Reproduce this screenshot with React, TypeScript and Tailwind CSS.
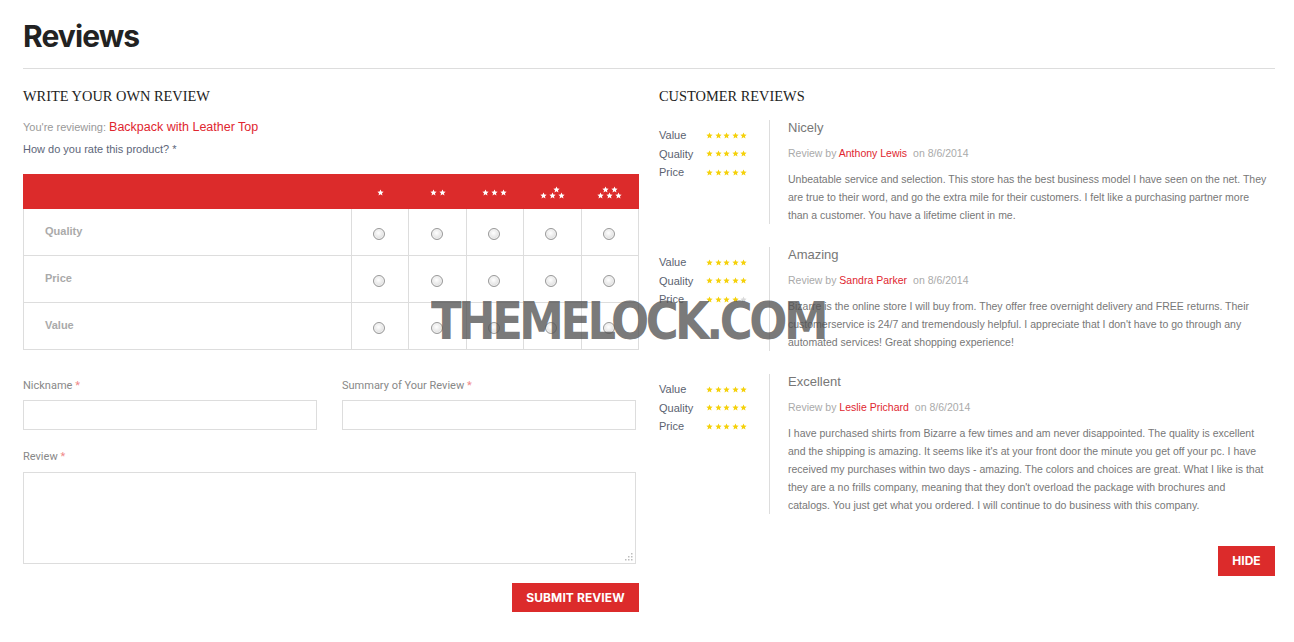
import React from "react";

const RED = "bg-[#dc2b2b]";

function Star({ className, size = 7 }: { className: string; size?: number }) {
  return (
    <svg width={size} height={size} viewBox="0 0 24 24" className={className}>
      <path d="M12 1.5l3.1 7.1 7.7.7-5.8 5.1 1.7 7.6L12 18l-6.7 4 1.7-7.6L1.2 9.3l7.7-.7z" fill="currentColor" />
    </svg>
  );
}

function Stars({ n }: { n: number }) {
  return (
    <div className="flex gap-[1.6px]">
      {[0, 1, 2, 3, 4].map((i) => (
        <Star key={i} size={7} className={i < n ? "text-[#f5d10a]" : "text-[#d9d9d9]"} />
      ))}
    </div>
  );
}

function HeadStars({ top, bottom, shift = 0 }: { top: number; bottom: number; shift?: number }) {
  return (
    <div className="flex flex-col items-center">
      {top > 0 && (
        <div className="flex gap-[2px] -mb-[1px]" style={{ transform: `translateX(${shift}px)` }}>
          {Array.from({ length: top }).map((_, i) => (
            <Star key={i} size={7} className="text-white" />
          ))}
        </div>
      )}
      <div className="flex gap-[2px]">
        {Array.from({ length: bottom }).map((_, i) => (
          <Star key={i} size={7} className="text-white" />
        ))}
      </div>
    </div>
  );
}

function Radio() {
  return (
    <span className="block w-[12px] h-[12px] rounded-full border border-[#9a9a9a] bg-[radial-gradient(circle_at_45%_40%,#ffffff_0%,#e6e6e6_55%,#c4c4c4_100%)] shadow-[inset_0_0_0_1px_#f2f2f2]" />
  );
}

const heads = [
  { top: 0, bottom: 1, shift: 0 },
  { top: 0, bottom: 2, shift: 0 },
  { top: 0, bottom: 3, shift: 0 },
  { top: 1, bottom: 3, shift: 4 },
  { top: 2, bottom: 3, shift: 0 },
];

const reviews = [
  {
    title: "Nicely",
    by: "Anthony Lewis",
    ratings: [5, 5, 5],
    body: "Unbeatable service and selection. This store has the best business model I have seen on the net. They are true to their word, and go the extra mile for their customers. I felt like a purchasing partner more than a customer. You have a lifetime client in me.",
  },
  {
    title: "Amazing",
    by: "Sandra Parker",
    ratings: [5, 5, 4],
    body: "Bizarre is the online store I will buy from. They offer free overnight delivery and FREE returns. Their customerservice is 24/7 and tremendously helpful. I appreciate that I don't have to go through any automated services! Great shopping experience!",
  },
  {
    title: "Excellent",
    by: "Leslie Prichard",
    ratings: [5, 5, 5],
    body: "I have purchased shirts from Bizarre a few times and am never disappointed. The quality is excellent and the shipping is amazing. It seems like it's at your front door the minute you get off your pc. I have received my purchases within two days - amazing. The colors and choices are great. What I like is that they are a no frills company, meaning that they don't overload the package with brochures and catalogs. You just get what you ordered. I will continue to do business with this company.",
  },
];

export default function App() {
  return (
    <div className="relative w-[1294px] h-[642px] bg-white overflow-hidden font-['Liberation_Sans',Arial,sans-serif]">
      <div className="ml-[23px] w-[1252px]">
        <div className="pt-[18px] pb-[14px] border-b border-[#dddddd]">
          <h1 className="font-['Inter',sans-serif] font-bold text-[30px] leading-[36px] text-[#222] tracking-[-0.9px]">
            Reviews
          </h1>
        </div>

        <div className="flex gap-[20px]">
          {/* Left column */}
          <div className="w-[616px]">
            <h3 className="mt-[17px] font-['Liberation_Serif',serif] text-[14.4px] leading-[20px] text-[#222] uppercase">
              Write your own review
            </h3>
            <p className="mt-[13px] text-[11px] leading-[16px] text-[#999]">
              You're reviewing: <span className="text-[12.5px] text-[#e0262f]">Backpack with Leather Top</span>
            </p>
            <p className="mt-[6px] text-[11px] leading-[16px] text-[#5d6679]">How do you rate this product? *</p>

            <table className="mt-[17px] w-[616px] border-collapse table-fixed">
              <colgroup>
                <col className="w-[328px]" />
                <col />
                <col />
                <col />
                <col />
                <col />
              </colgroup>
              <thead>
                <tr className={`${RED} h-[34px]`}>
                  <th className="border border-[#dc2b2b]" />
                  {heads.map((h, i) => (
                    <th key={i} className="border border-[#dc2b2b] align-middle">
                      <div className="flex justify-center pt-[1px]">
                        <HeadStars top={h.top} bottom={h.bottom} shift={h.shift} />
                      </div>
                    </th>
                  ))}
                </tr>
              </thead>
              <tbody>
                {["Quality", "Price", "Value"].map((label) => (
                  <tr key={label} className="h-[47px]">
                    <td className="border border-[#dddddd] pl-[21px] text-[11px] font-bold text-[#aaaaaa] align-middle">
                      <span className="relative -top-[1px]">{label}</span>
                    </td>
                    {[0, 1, 2, 3, 4].map((i) => (
                      <td key={i} className="border border-[#dddddd] align-middle">
                        <div className="flex justify-center pt-[4px] -ml-[2px]">
                          <Radio />
                        </div>
                      </td>
                    ))}
                  </tr>
                ))}
              </tbody>
            </table>

            <div className="mt-[27px] flex gap-[25px] w-[613px]">
              <div className="flex-1">
                <label className="block font-['Roboto',sans-serif] text-[11px] leading-[17px] text-[#888]">
                  Nickname <span className="text-[#f08a8a]">*</span>
                </label>
                <div className="mt-[6px] h-[30px] border border-[#dddddd]" />
              </div>
              <div className="flex-1">
                <label className="block font-['Roboto',sans-serif] text-[11px] leading-[17px] text-[#888]">
                  Summary of Your Review <span className="text-[#f08a8a]">*</span>
                </label>
                <div className="mt-[6px] h-[30px] border border-[#dddddd]" />
              </div>
            </div>

            <label className="mt-[18px] block font-['Roboto',sans-serif] text-[11px] leading-[17px] text-[#888]">
              Review <span className="text-[#f08a8a]">*</span>
            </label>
            <div className="relative mt-[7px] w-[613px] h-[92px] border border-[#dddddd]">
              <svg width="9" height="9" viewBox="0 0 9 9" className="absolute right-[2px] bottom-[2px]">
                <g fill="#bdbdbd">
                  <rect x="7" y="1" width="1.5" height="1.5" />
                  <rect x="4" y="4" width="1.5" height="1.5" />
                  <rect x="7" y="4" width="1.5" height="1.5" />
                  <rect x="1" y="7" width="1.5" height="1.5" />
                  <rect x="4" y="7" width="1.5" height="1.5" />
                  <rect x="7" y="7" width="1.5" height="1.5" />
                </g>
              </svg>
            </div>

            <div className="mt-[19px] flex justify-end">
              <button className={`${RED} h-[29px] w-[127px] text-white font-['Inter',sans-serif] font-bold text-[12px] tracking-[0.1px] uppercase`}>
                Submit Review
              </button>
            </div>
          </div>

          {/* Right column */}
          <div className="w-[616px]">
            <h3 className="mt-[17px] font-['Liberation_Serif',serif] text-[14.4px] leading-[20px] text-[#222] uppercase">
              Customer reviews
            </h3>
            <div className="mt-[14px] flex flex-col gap-[23px]">
              {reviews.map((r) => (
                <div key={r.title} className="flex">
                  <div className="w-[110px] shrink-0 pt-[6px]">
                    {["Value", "Quality", "Price"].map((l, i) => (
                      <div key={l} className="flex items-center h-[18.5px]">
                        <span className="w-[47px] text-[11px] text-[#5b6270]">{l}</span>
                        <Stars n={r.ratings[i]} />
                      </div>
                    ))}
                  </div>
                  <div className="border-l border-[#dddddd] pl-[18px] w-[506px]">
                    <div className="text-[13px] leading-[16px] text-[#777]">{r.title}</div>
                    <div className="mt-[9px] text-[10.5px] leading-[16px] text-[#aaa]">
                      Review by <span className="text-[#e0262f]">{r.by}</span>
                      <span className="ml-[6px]">on 8/6/2014</span>
                    </div>
                    <p className="mt-[9px] text-[10.5px] leading-[18px] text-[#777] pr-[6px]">{r.body}</p>
                  </div>
                </div>
              ))}
            </div>
            <div className="mt-[32px] flex justify-end">
              <button className={`${RED} h-[30px] w-[57px] text-white font-['Inter',sans-serif] font-bold text-[12px] uppercase`}>
                Hide
              </button>
            </div>
          </div>
        </div>
      </div>

      <div className="pointer-events-none absolute left-[431px] top-[292px] origin-left scale-x-[0.88] whitespace-nowrap font-['DejaVu_Sans',sans-serif] font-bold text-[51px] leading-[60px] tracking-[-4px] text-[rgba(85,85,85,0.8)]">
        THEMELOCK.COM
      </div>
    </div>
  );
}
